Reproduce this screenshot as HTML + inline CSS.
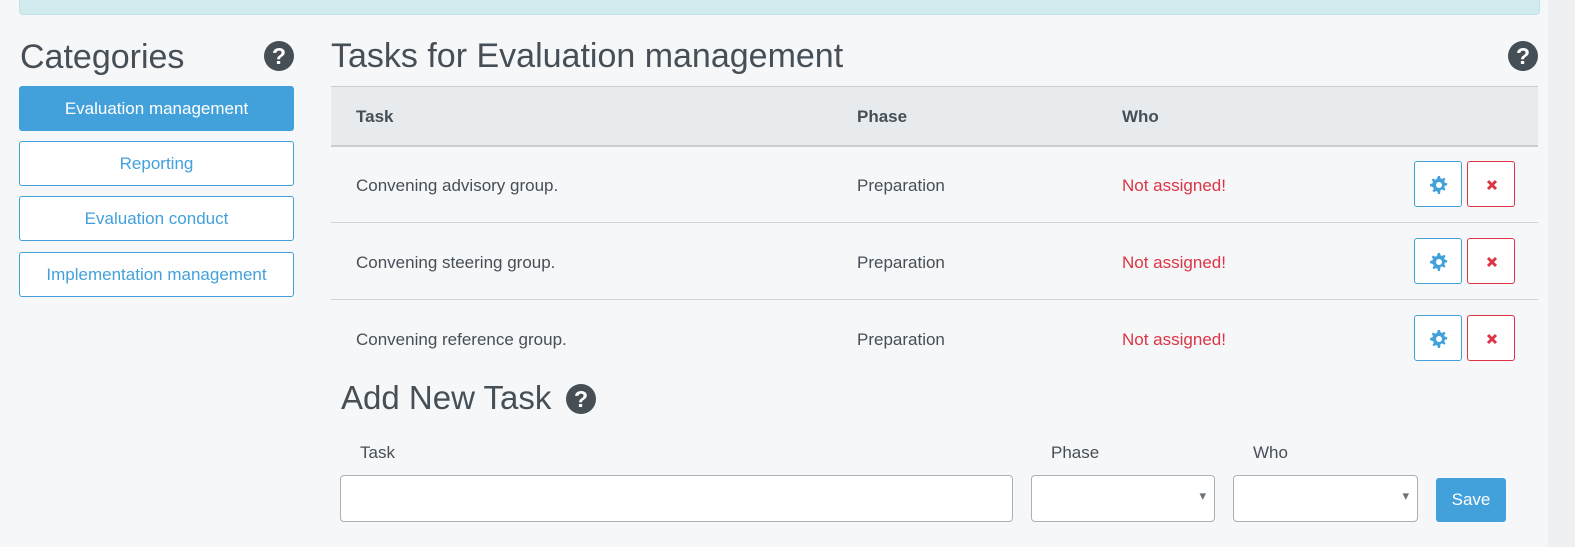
<!DOCTYPE html>
<html><head><style>
body{margin:0;width:1575px;height:547px;background:#f6f7f9;font-family:"Liberation Sans",sans-serif;color:#464f56;position:relative;overflow:hidden}
.a{position:absolute}
.q{position:absolute;width:30px;height:30px;border-radius:50%;background:#464f56;color:#fff;font-weight:bold;font-size:23px;text-align:center;line-height:30px}
.cat{position:absolute;left:19px;width:273px;height:43px;border:1px solid #42a1db;border-radius:3px;color:#42a1db;font-size:17px;text-align:center;line-height:43px;background:#fff}
.row{position:absolute;left:331px;width:1207px;height:76px;border-bottom:1px solid #cfd3d6;font-size:17px}
.row span{position:absolute;top:30px}
.b{position:absolute;width:46px;height:44px;border:1px solid;border-radius:3px;top:15px;background:#fff}
.b svg{position:absolute;left:15px;top:14px}
.sel{position:absolute;top:475px;height:45px;border:1px solid #aab0b5;border-radius:4px;background:#fff}
.sel:after{content:"▾";position:absolute;right:8px;top:12px;color:#6b7278;font-size:13px}
</style></head><body>
<div class="a" style="left:1548px;top:0;width:27px;height:547px;background:#eef0f2"></div>
<div class="a" style="left:19px;top:-5px;width:1519px;height:18px;background:#d1ebef;border:1px solid #bfe2e7;border-radius:4px"></div>
<div class="a" style="left:20px;top:38px;font-size:34px">Categories</div>
<div class="q" style="left:264px;top:41px">?</div>
<div class="cat" style="top:86px;background:#42a1db;color:#fff;height:45px;line-height:45px;border:none;width:275px">Evaluation management</div>
<div class="cat" style="top:141px">Reporting</div>
<div class="cat" style="top:196px">Evaluation conduct</div>
<div class="cat" style="top:252px">Implementation management</div>
<div class="a" style="left:331px;top:37px;font-size:34px">Tasks for Evaluation management</div>
<div class="q" style="left:1508px;top:41px">?</div>
<div class="a" style="left:331px;top:86px;width:1207px;height:58px;background:#e7ebee;border-top:1px solid #c9ced3;border-bottom:2px solid #c9ced3;font-size:17px;font-weight:bold">
<span class="a" style="left:25px;top:20px">Task</span><span class="a" style="left:526px;top:20px">Phase</span><span class="a" style="left:791px;top:20px">Who</span></div>
<svg width="0" height="0" style="position:absolute"><defs>
<g id="gear"><path fill="#42a1db" d="M8 0h2l.5 2.3 1.6.7 2-1.3 1.4 1.4-1.3 2 .7 1.6 2.3.5v2l-2.3.5-.7 1.6 1.3 2-1.4 1.4-2-1.3-1.6.7L10 18H8l-.5-2.3-1.6-.7-2 1.3-1.4-1.4 1.3-2-.7-1.6L0 10V8l2.3-.5.7-1.6-1.3-2 1.4-1.4 2 1.3 1.6-.7z"/><circle cx="9" cy="9" r="3" fill="#fff"/></g>
<g id="x"><path stroke="#dc3545" stroke-width="3" d="M5 5l8 8M13 5L5 13"/></g></defs></svg>
<div class="row" style="top:146px"><span style="left:25px">Convening advisory group.</span><span style="left:526px">Preparation</span><span style="left:791px;color:#dc3545">Not assigned!</span><div class="b" style="left:1083px;border-color:#42a1db"><svg width="18" height="18"><use href="#gear"/></svg></div><div class="b" style="left:1136px;border-color:#dc3545"><svg width="18" height="18"><use href="#x"/></svg></div></div>
<div class="row" style="top:223px"><span style="left:25px">Convening steering group.</span><span style="left:526px">Preparation</span><span style="left:791px;color:#dc3545">Not assigned!</span><div class="b" style="left:1083px;border-color:#42a1db"><svg width="18" height="18"><use href="#gear"/></svg></div><div class="b" style="left:1136px;border-color:#dc3545"><svg width="18" height="18"><use href="#x"/></svg></div></div>
<div class="row" style="top:300px;border:none"><span style="left:25px">Convening reference group.</span><span style="left:526px">Preparation</span><span style="left:791px;color:#dc3545">Not assigned!</span><div class="b" style="left:1083px;border-color:#42a1db"><svg width="18" height="18"><use href="#gear"/></svg></div><div class="b" style="left:1136px;border-color:#dc3545"><svg width="18" height="18"><use href="#x"/></svg></div></div>
<div class="a" style="left:341px;top:379px;font-size:33px">Add New Task</div>
<div class="q" style="left:566px;top:384px">?</div>
<div class="a" style="left:360px;top:443px;font-size:17px">Task</div>
<div class="a" style="left:1051px;top:443px;font-size:17px">Phase</div>
<div class="a" style="left:1253px;top:443px;font-size:17px">Who</div>
<div class="a" style="left:340px;top:475px;width:671px;height:45px;border:1px solid #aab0b5;border-radius:4px;background:#fff"></div>
<div class="sel" style="left:1031px;width:182px"></div>
<div class="sel" style="left:1233px;width:183px"></div>
<div class="a" style="left:1436px;top:478px;width:70px;height:44px;background:#42a1db;border-radius:3px;color:#fff;font-size:17px;text-align:center;line-height:44px">Save</div>
</body></html>
